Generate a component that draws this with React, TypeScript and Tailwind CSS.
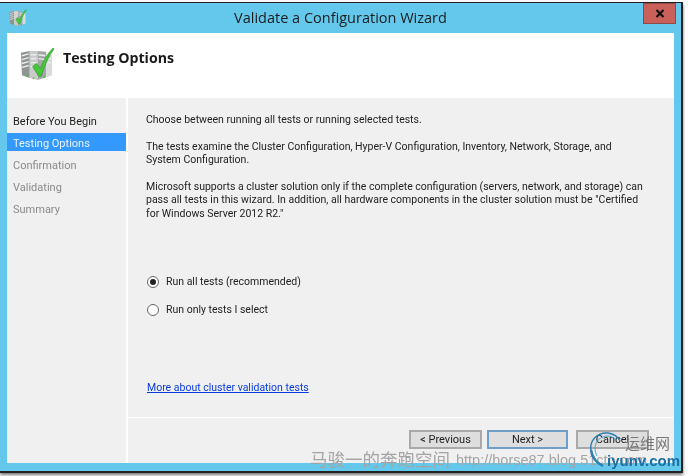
import React from "react";

const steps = [
  { name: "Before You Begin", cls: "text-[#222]" },
  { name: "Testing Options", cls: "bg-[#3399ff] text-[#e8f3ff]" },
  { name: "Confirmation", cls: "text-[#8a8a8a]" },
  { name: "Validating", cls: "text-[#8a8a8a]" },
  { name: "Summary", cls: "text-[#8a8a8a]" },
];

function ClusterIcon({ size }: { size: number }) {
  return (
    <svg width={size} height={size} viewBox="0 0 36 36">
      <path d="M1 6l9-2v28l-8-3z" fill="#8f9394" />
      <path d="M10 4l8 0 0 30-8-2z" fill="#c9cbcb" />
      <path d="M18 4l9 1v26l-9 3z" fill="#a4a7a8" />
      <path d="M27 8l6 0v21l-6 2z" fill="#d9dbdb" />
      <path d="M2 9l7-2M2 13l7-2M2 17l7-2M2 21l7-2M11 8h6M11 12h6M11 16h6M11 20h6M19 8l7 1M19 12l7 1M28 12h4M28 16h4" stroke="#eceded" strokeWidth="1.4" />
      <path d="M13 20l4-3 4 5c3-8 7-15 13-21l1 1c-5 7-10 17-13 28h-3z" fill="#46c63a" stroke="#2c8f25" strokeWidth="0.6" />
      <circle cx="7" cy="29" r="1" fill="#46c63a" />
      <circle cx="14" cy="32" r="1" fill="#46c63a" />
      <circle cx="25" cy="31" r="1" fill="#46c63a" />
    </svg>
  );
}

function Radio({ checked, label }: { checked?: boolean; label: string }) {
  return (
    <label className="flex items-center gap-[7px] h-[14px] pl-[1px]">
      <span className="w-[12px] h-[12px] rounded-full border border-[#666] bg-white flex items-center justify-center shrink-0">
        {checked && <span className="w-[6px] h-[6px] rounded-full bg-[#222]" />}
      </span>
      <span>{label}</span>
    </label>
  );
}

function WizButton({ label, active, cls }: { label: string; active?: boolean; cls: string }) {
  return (
    <button
      className={`h-[19px] text-[11px] leading-none text-[#222] bg-[#dedede] border-2 font-['Roboto',sans-serif] ${cls} ${
        active ? "border-[#6f9fc8]" : "border-[#a9a9a9]"
      }`}
    >
      {label}
    </button>
  );
}

export default function App() {
  return (
    <div className="relative w-[688px] h-[476px] bg-white overflow-hidden font-['Roboto',sans-serif] blur-[0.3px]">
      <div className="w-[683px] h-[471px] mt-[2px] border-r-2 border-t border-b-2 border-[#222] bg-[#63c8ec] flex flex-col shadow-[0_2px_3px_#777]">
        {/* title bar */}
        <div className="h-[30px] shrink-0 flex items-start">
          <div className="w-[34px] pl-[9px] pt-[6px] shrink-0">
            <ClusterIcon size={18} />
          </div>
          <div className="flex-1 text-center text-[14.5px] leading-[29px] text-[#1b1b1b] pl-[4px] font-['Open_Sans',sans-serif]">
            Validate a Configuration Wizard
          </div>
          <div className="w-[33px] h-[21px] mr-[5px] bg-[#c9605a] border border-[#8f4a46] flex items-center justify-center shrink-0">
            <svg width="10" height="9" viewBox="0 0 10 9">
              <path d="M1.5 1l7 7M8.5 1l-7 7" stroke="#111" strokeWidth="2.2" />
            </svg>
          </div>
        </div>

        {/* client area */}
        <div className="mx-[7px] mb-[8px] flex-1 flex flex-col bg-white">
          <div className="h-[63px] shrink-0 flex items-start pl-[13px] pt-[14px] gap-[8px] bg-white">
            <ClusterIcon size={35} />
            <div className="text-[14.2px] font-bold leading-[22px] text-[#1a1a1a] font-['Open_Sans',sans-serif]">Testing Options</div>
          </div>
          <div className="flex-1 flex gap-[2px] pt-[2px] min-h-0">
            <div className="w-[119px] shrink-0 bg-[#f0f0f0] pt-[13px] text-[11px]">
              {steps.map((s) => (
                <div key={s.name} className={`h-[18px] mb-[4px] leading-[22px] pl-[6px] ${s.cls}`}>
                  {s.name}
                </div>
              ))}
            </div>
            <div className="flex-1 flex flex-col bg-[#f0f0f0] min-w-0">
              <div className="h-[320px] shrink-0 border-b border-white pl-[18px] pt-[15px] text-[10.5px] leading-[13.5px] text-[#222] flex flex-col whitespace-nowrap">
                <p>Choose between running all tests or running selected tests.</p>
                <p className="mt-[13px]">
                  The tests examine the Cluster Configuration, Hyper-V Configuration, Inventory, Network, Storage, and
                  <br />
                  System Configuration.
                </p>
                <p className="mt-[13px]">
                  Microsoft supports a cluster solution only if the complete configuration (servers, network, and storage) can
                  <br />
                  pass all tests in this wizard. In addition, all hardware components in the cluster solution must be "Certified
                  <br />
                  for Windows Server 2012 R2."
                </p>
                <div className="mt-[55px] flex flex-col gap-[14px]">
                  <Radio checked label="Run all tests (recommended)" />
                  <Radio label="Run only tests I select" />
                </div>
                <a className="mt-[64px] pl-[1px] text-[#0a3cdc] underline">More about cluster validation tests</a>
              </div>
              <div className="flex-1 flex justify-end pt-[12px] pr-[25px]">
                <WizButton label="< Previous" cls="w-[73px] mr-[5px]" />
                <WizButton label="Next >" cls="w-[81px] mr-[8px]" active />
                <WizButton label="Cancel" cls="w-[73px]" />
              </div>
            </div>
          </div>
        </div>
      </div>

      {/* watermark over the window */}
      <div className="absolute left-[310px] top-[451px] flex items-center h-[18px] gap-[6px] leading-[18px] text-[#a4a4a4] whitespace-nowrap font-['Liberation_Sans','Noto_Sans_CJK_SC',sans-serif]">
        <span className="text-[17.5px]">马骏一的奔跑空间</span>
        <span className="text-[14.5px]">http://horse87.blog.51cto.com</span>
      </div>
      <svg className="absolute left-[584px] top-[426px]" width="44" height="44" viewBox="0 0 44 44" fill="none">
        <path d="M7 25C5 14 14 6 24 7c6 1 10 4 12 8" stroke="#2f7fb0" strokeWidth="1.5" />
        <path d="M13 30C8 20 13 11 23 10c3 0 6 1 8 3" stroke="#4aa3d0" strokeWidth="1" />
        <path d="M7 24c1 8 6 13 12 16" stroke="#2f7fb0" strokeWidth="2.5" />
      </svg>
      <div className="absolute left-[625px] top-[434px] text-[15px] leading-[18px] text-[#777] font-['Noto_Sans_CJK_SC',sans-serif]">运维网</div>
      <div className="absolute left-[607px] top-[452px] text-[15px] font-bold leading-[17px] text-[#1c6fa3] font-['Liberation_Sans',sans-serif]">iyunv.com</div>
    </div>
  );
}
